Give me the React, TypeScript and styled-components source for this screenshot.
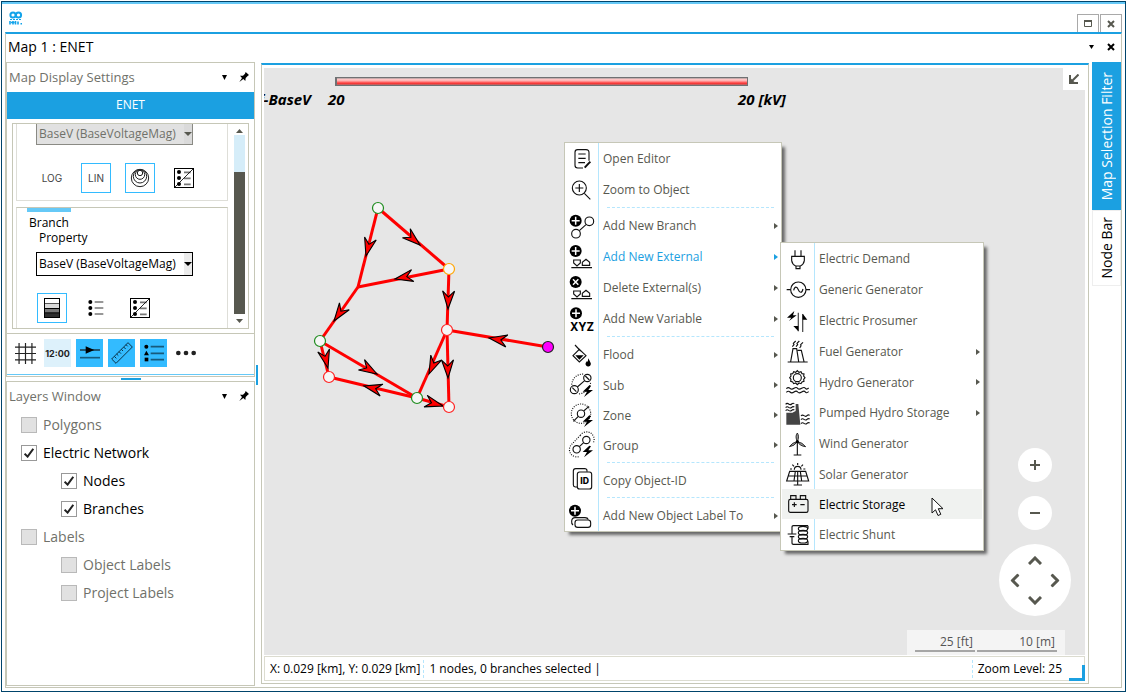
import React, { useState } from 'react';
import styled, { createGlobalStyle, css } from 'styled-components';

const c = {
  navy: '#00446b',
  blue: '#1ba0e1',
  sky: '#66c9f7',
  bright: '#33bbff',
  pale: '#b5e6fd',
  khaki: '#c6c7b7',
  text: '#57584f',
  muted: '#70716a',
  map: '#e6e6e6',
};

const GlobalStyle = createGlobalStyle`
  * { box-sizing: border-box; }
  body { margin: 0; background: #fff; font-family: "Open Sans", "Noto Sans", sans-serif; font-size: 12px; color: #000; }
  button, select, input { font: inherit; color: inherit; margin: 0; }
  button { padding: 0; border: 0; background: none; }
  svg { display: block; flex: none; }
`;

const Frame = styled.div`
  min-height: 100vh;
  padding: 1px 0 1px 1px;
  display: flex;
`;
const Window = styled.div`
  flex: 1;
  min-width: 0;
  display: flex;
  flex-direction: column;
  border: 1px solid ${c.navy};
  box-shadow: inset 0 2px 0 ${c.sky};
  padding: 2px 3px 3px;
`;
const TitleBar = styled.header`
  height: 28px;
  padding-left: 4px;
  display: flex;
  align-items: flex-end;
  justify-content: space-between;
`;
const LogoSlot = styled.span`
  align-self: center;
`;
const WindowButtons = styled.div`
  display: flex;
  gap: 1px;
`;
const WindowButton = styled.button`
  width: 22px;
  height: 18px;
  border: 1px solid #a9a9a9;
  border-bottom: 0;
  color: ${c.text};
  display: grid;
  place-items: center;
`;
const Workspace = styled.div`
  flex: 1;
  display: flex;
  flex-direction: column;
  border: 1px solid ${c.khaki};
  border-top: 2px solid ${c.blue};
`;
const Caption = styled.div`
  height: 28px;
  padding: 0 6px 2px 2px;
  display: flex;
  align-items: center;
  gap: 13px;
`;
const CaptionTitle = styled.h1`
  flex: 1;
  margin: 0;
  font-size: 14px;
  line-height: 18px;
  font-weight: 400;
`;
const Body = styled.div`
  flex: 1;
  display: flex;
`;
const Sidebar = styled.aside`
  width: 249px;
  flex: none;
  display: flex;
  flex-direction: column;
`;
const Panel = styled.section<{ $grow?: boolean }>`
  border: 1px solid ${c.khaki};
  ${(p) => p.$grow && css`flex: 1; margin-bottom: 1px;`}
`;
const PanelHead = styled.div`
  height: 29px;
  padding: 0 5px 1px 2px;
  display: flex;
  align-items: center;
  gap: 12px;
  color: ${c.muted};
`;
const PanelTitle = styled.h2`
  flex: 1;
  margin: 0;
  font-size: 13px;
  font-weight: 400;
`;
const GlyphButton = styled.button`
  color: #000;
`;
const NetworkBar = styled.div`
  height: 27px;
  background: ${c.blue};
  color: #fff;
  text-align: center;
  line-height: 25px;
`;
const ScrollBox = styled.div`
  margin: 4px 5px;
  height: 206px;
  border: 1px solid ${c.khaki};
  display: flex;
  overflow: hidden;
`;
const Groups = styled.div`
  flex: 1;
  padding-left: 3px;
  display: flex;
  flex-direction: column;
  gap: 6px;
`;
const Group = styled.div<{ $last?: boolean }>`
  border: 1px solid #deded8;
  ${(p) => (p.$last
    ? css`border-bottom: 0; border-top-color: ${c.khaki}; flex: 1; padding-left: 10px;`
    : css`border-top: 0; height: 77px; padding-left: 10px;`)}
`;
const GroupAccent = styled.div`
  width: 44px;
  height: 4px;
  background: ${c.sky};
`;
const GroupName = styled.div`
  line-height: 16px;
  padding: 3px 0 0 2px;
`;
const FieldLabel = styled.label`
  display: block;
  line-height: 14px;
  padding-left: 12px;
  font-size: 12px;
`;
const SelectBox = styled.div<{ $off?: boolean }>`
  position: relative;
  width: 157px;
  height: ${(p) => (p.$off ? 21 : 24)}px;
  margin: ${(p) => (p.$off ? '0 0 18px 9px' : '7px 0 17px 9px')};
  border: 1px solid ${(p) => (p.$off ? '#8a8a84' : '#000')};
  ${(p) => p.$off && css`border-top: 0;`}
`;
const Select = styled.select<{ $off?: boolean }>`
  appearance: none;
  width: 100%;
  height: 100%;
  padding: 0 10px 1px 2px;
  border: 0;
  border-radius: 0;
  opacity: 1;
  font-size: 12px;
  background: ${(p) => (p.$off ? '#e1e1e1' : '#fff')};
  color: ${(p) => (p.$off ? '#70716a' : '#000')};
`;
const SelectArrow = styled.span<{ $off?: boolean }>`
  position: absolute;
  top: 0;
  right: 0;
  width: 8px;
  height: 100%;
  display: grid;
  place-items: center;
  pointer-events: none;
  background: ${(p) => (p.$off ? '#dadada' : '#ececec')};
  color: ${(p) => (p.$off ? '#57584f' : '#000')};
`;
const ModeRow = styled.div`
  display: flex;
  gap: 14px;
  padding-left: 10px;
`;
const ModeButton = styled.button<{ $on?: boolean }>`
  width: 30px;
  height: 30px;
  display: grid;
  place-items: center;
  border: 1px solid ${(p) => (p.$on ? c.bright : 'transparent')};
  font-family: Inter, sans-serif;
  font-size: 10px;
  color: #444;
`;
const ScrollBar = styled.div`
  width: 20px;
  padding: 3px 3px 3px 6px;
  display: flex;
  flex-direction: column;
  align-items: center;
`;
const ScrollArrow = styled.span`
  height: 8px;
  display: grid;
  place-items: center;
  color: ${c.text};
`;
const ScrollTrack = styled.div`
  width: 11px;
  flex: 1;
  padding-top: 37px;
  margin-bottom: 3px;
  background: #d5edf9;
  display: flex;
`;
const ScrollThumb = styled.div`
  flex: 1;
  background: ${c.text};
`;
const Tools = styled.div`
  height: 43px;
  padding: 5px 5px 9px;
  display: flex;
  align-items: center;
  gap: 5px;
  border: 1px solid ${c.khaki};
  border-top: 0;
  box-shadow: inset 0 -1px 0 #fff, inset 0 -2px 0 ${c.sky};
`;
const ToolButton = styled.button<{ $tone?: string }>`
  width: 27px;
  height: 28px;
  display: grid;
  place-items: center;
  background: ${(p) => p.$tone || 'none'};
  font: 700 9px Inter, sans-serif;
  color: #222;
`;
const RowSplitter = styled.div`
  height: 4px;
  display: flex;
  justify-content: center;
`;
const RowGrip = styled.span`
  width: 20px;
  height: 2px;
  margin-top: 1px;
  background: ${c.blue};
`;
const ColumnSplitter = styled.div`
  width: 6px;
  padding-left: 1px;
  display: flex;
  align-items: center;
`;
const ColumnGrip = styled.span`
  width: 2px;
  height: 20px;
  background: ${c.blue};
`;
const LayerList = styled.ul`
  list-style: none;
  margin: 0;
  padding: 0 0 0 14px;
`;
const LayerRow = styled.li<{ $child?: boolean; $on?: boolean }>`
  height: 28px;
  padding-left: ${(p) => (p.$child ? 40 : 0)}px;
  display: flex;
  align-items: center;
  color: ${(p) => (p.$on ? '#000' : '#70716a')};
`;
const LayerLabel = styled.label`
  display: flex;
  align-items: center;
  gap: 6px;
  font-size: 14px;
  line-height: 18px;
`;
const CheckCell = styled.span`
  display: grid;
  place-items: center;
  > * { grid-area: 1 / 1; }
  svg { pointer-events: none; }
`;
const CheckInput = styled.input`
  appearance: none;
  width: 16px;
  height: 16px;
  border: 1px solid #b9b9b9;
  background: #e1e1e1;
  &:checked { background: #fff; border-color: #999; }
`;
const MapPane = styled.main`
  flex: 1;
  min-width: 0;
  display: flex;
  flex-direction: column;
  margin: 1px 3px 3px 0;
  padding: 3px 3px 2px 2px;
  border: 1px solid ${c.khaki};
  border-top: 2px solid ${c.blue};
`;
const MapCanvas = styled.div`
  position: relative;
  flex: 1;
  min-height: 587px;
  overflow: hidden;
  background: ${c.map};
`;
const LegendScale = styled.div`
  width: 413px;
  height: 9px;
  margin: 9px 0 0 71px;
  border: 1px solid #6f7173;
  border-left-width: 2px;
  background: linear-gradient(#a8a0a0 0, #ffc4c4 20%, #ffb0b0 40%, #ff3030 75%, #b07070 100%);
`;
const LegendText = styled.div`
  display: flex;
  margin-left: -6px;
  line-height: 17px;
  padding-top: 5px;
  font-weight: 700;
  font-style: italic;
  font-size: 15px;
`;
const LegendName = styled.span`
  width: 70px;
`;
const LegendLow = styled.span`
  width: 410px;
`;
const Network = styled.svg`
  position: absolute;
  left: 0;
  top: 0;
`;
const CollapseButton = styled.button`
  position: absolute;
  top: 0;
  right: 0;
  width: 22px;
  height: 22px;
  background: #fff;
  display: grid;
  place-items: center;
  color: ${c.text};
`;
const MapControls = styled.div`
  position: absolute;
  right: 14px;
  bottom: 39px;
  display: flex;
  flex-direction: column;
  align-items: center;
  gap: 14px;
`;
const ZoomButton = styled.button`
  width: 34px;
  height: 34px;
  border-radius: 50%;
  background: #fff;
  display: grid;
  place-items: center;
  color: ${c.text};
`;
const PanPad = styled.div`
  width: 72px;
  height: 72px;
  padding: 6px;
  border-radius: 50%;
  background: #fff;
  display: grid;
  grid-template-columns: repeat(3, 1fr);
  grid-template-rows: repeat(3, 1fr);
  color: ${c.text};
`;
const PanButton = styled.button<{ $area: string; $turn: number }>`
  grid-area: ${(p) => p.$area};
  display: grid;
  place-items: center;
  svg { transform: rotate(${(p) => p.$turn}deg); }
`;
const ScaleBar = styled.div`
  position: absolute;
  right: 20px;
  bottom: 0;
  height: 25px;
  padding: 3px 8px;
  display: flex;
  gap: 2px;
  background: #f4f4f4;
  color: #555;
`;
const ScaleUnit = styled.div<{ $w: number }>`
  width: ${(p) => p.$w}px;
  height: 19px;
  padding-right: 2px;
  border-bottom: 2px solid #a6a6a6;
  text-align: right;
  line-height: 18px;
`;
const StatusBar = styled.footer`
  height: 25px;
  margin-top: 1px;
  border: 1px solid #dcdcd0;
  padding-left: 5px;
  display: flex;
  align-items: center;
`;
const StatusItem = styled.span`
  padding-right: 3px;
  margin-right: 5px;
  line-height: 18px;
  border-right: 1px dashed ${c.pale};
  white-space: nowrap;
`;
const StatusText = styled.span`
  flex: 1;
  white-space: pre;
`;
const ZoomLevel = styled.span`
  padding: 0 7px 0 5px;
  line-height: 18px;
  border-left: 1px dashed ${c.pale};
`;
const ResizeCorner = styled.span`
  width: 16px;
  height: 16px;
  margin: 0 -1px -1px 0;
  align-self: flex-end;
  border: solid ${c.blue};
  border-width: 0 3px 3px 0;
`;
const SideTabs = styled.nav`
  width: 29px;
  flex: none;
`;
const SideTab = styled.button<{ $on?: boolean; $h: number }>`
  width: 29px;
  height: ${(p) => p.$h}px;
  display: flex;
  align-items: center;
  justify-content: center;
  border: 1px solid #eee;
  font-size: 14px;
  ${(p) => p.$on && css`background: ${c.blue}; border-color: ${c.blue}; color: #fff;`}
  span { writing-mode: vertical-rl; transform: rotate(180deg); white-space: nowrap; }
`;
const Menu = styled.div<{ $x: number; $y: number; $w: number }>`
  position: absolute;
  left: ${(p) => p.$x}px;
  top: ${(p) => p.$y}px;
  width: ${(p) => p.$w}px;
  border: 1px solid ${c.khaki};
  background: linear-gradient(90deg, #fff 33px, ${c.pale} 33px, ${c.pale} 34px, #fff 34px);
  box-shadow: 4px 4px 3px -1px rgba(0, 0, 0, 0.55);
`;
const MenuRow = styled.button<{ $tight?: boolean; $tone?: 'active' | 'hover' }>`
  width: 100%;
  height: ${(p) => (p.$tight ? 30 : 31)}px;
  padding: 0 3px 0 4px;
  display: flex;
  align-items: center;
  gap: 8px;
  text-align: left;
  color: ${(p) => (p.$tone === 'active' ? c.blue : p.$tone === 'hover' ? '#000' : c.text)};
  ${(p) => p.$tone === 'hover' && css`background: #f0f2f0; background-clip: padding-box; border: solid transparent; border-width: 0 1px; padding: 0 3px;`}
`;
const MenuText = styled.span`
  flex: 1;
  white-space: nowrap;
`;
const MenuRule = styled.div`
  height: 5px;
  margin: 0 7px 0 42px;
  display: flex;
  align-items: center;
  &::after { content: ''; flex: 1; border-top: 1px dashed ${c.pale}; }
`;
const MenuIconBox = styled.span`
  color: #111;
  svg { overflow: visible; }
`;
const Pointer = styled.svg`
  position: absolute;
  left: 667px;
  top: 429px;
`;

const Caret = ({ w = 5, h = 5 }: { w?: number; h?: number }) => (
  <svg width={w} height={h} viewBox="0 0 10 10" preserveAspectRatio="none" fill="currentColor"><path d="M0 0H10L5 10Z" /></svg>
);
const Pin = () => (
  <svg width="10" height="10" viewBox="0 0 30 30" fill="currentColor"><path d="M20 0L30 9L26 12L20 18L19 27L13 21L1 30L9 18L3 11L12 11L18 5Z" /></svg>
);
const Cross = () => (
  <svg width="8" height="8" viewBox="0 0 8 8" stroke="currentColor" strokeWidth="2"><path d="M1 1L7 7M7 1L1 7" /></svg>
);
const Logo = () => (
  <svg width="14" height="14" viewBox="0 0 14 14" fill="none" stroke="#12a3ea" strokeWidth="2">
    <circle cx="4" cy="4" r="2.6" /><circle cx="9.5" cy="4" r="2.6" />
    <path d="M1 8.5H12" strokeWidth="1" strokeDasharray="2 1" />
    <path d="M1 10V13.5M2 11.5H5.5M6.5 10V13.5M9 10.5V13.5M11.5 12.8H13" strokeWidth="1.6" />
    <path d="M4 10V13.5" strokeWidth="1.6" />
  </svg>
);
const ListCrossed = () => (
  <svg width="20" height="20" viewBox="0 0 60 60" fill="none" stroke="#000">
    <rect x="1.5" y="1.5" width="57" height="57" strokeWidth="3" />
    <g fill="#000" stroke="none"><circle cx="15" cy="12" r="6" /><circle cx="15" cy="30" r="6" /><circle cx="15" cy="48" r="6" /></g>
    <path d="M30 13H50M30 31H50M30 49H50" stroke="#777" strokeWidth="5" />
    <path d="M3 57L57 3" strokeWidth="2.5" />
  </svg>
);
const Rings = () => (
  <svg width="20" height="20" viewBox="0 0 60 60" fill="none" stroke="#222" strokeWidth="3">
    <circle cx="30" cy="30" r="26" /><circle cx="30" cy="25" r="20" /><circle cx="30" cy="20" r="14" /><circle cx="30" cy="15" r="8" />
  </svg>
);
const Shades = () => (
  <svg width="16" height="20" viewBox="0 0 48 60">
    <rect width="48" height="60" fill="#000" /><rect x="3" y="3" width="42" height="13" fill="#fff" />
    <rect x="3" y="18" width="42" height="12" fill="#dadada" /><rect x="3" y="33" width="42" height="10" fill="#777" />
    <rect x="3" y="46" width="42" height="11" fill="#2c2c2c" />
  </svg>
);
const Bullets = () => (
  <svg width="16" height="18" viewBox="0 0 48 54">
    <g><circle cx="7" cy="9" r="6" /><circle cx="7" cy="27" r="6" /><circle cx="7" cy="45" r="6" /></g>
    <path d="M20 9H46M20 27H46M20 45H46" stroke="#777" strokeWidth="5" />
  </svg>
);
const GridIcon = () => (
  <svg width="21" height="21" viewBox="0 0 62 62" stroke="#222" strokeWidth="3.5"><path d="M12 0V62M31 0V62M50 0V62M0 12H62M0 31H62M0 50H62" /></svg>
);
const FlowIcon = () => (
  <svg width="20" height="14" viewBox="0 0 60 42"><path d="M0 12H60" stroke="#111" strokeWidth="3.5" /><path d="M17 1L43 12L17 23Z" /><path d="M0 35H60" stroke="#165a7c" strokeWidth="5" /></svg>
);
const RulerIcon = () => (
  <svg width="22" height="22" viewBox="0 0 66 66" fill="none" stroke="#0c3348" strokeWidth="3">
    <path d="M2 51L51 2L64 15L15 64Z" /><path d="M10 43L16 49M17 36L22 41M24 29L30 35M31 22L36 27M38 15L44 21M45 8L50 13" />
  </svg>
);
const LayersListIcon = () => (
  <svg width="20" height="18" viewBox="0 0 60 54"><circle cx="7" cy="8" r="6" /><path d="M7 20L15 34H0Z" /><rect x="2" y="41" width="11" height="11" /><path d="M20 8H60M20 28H60M20 47H60" stroke="#175a7c" strokeWidth="5" /></svg>
);
const DotsIcon = () => (
  <svg width="20" height="6" viewBox="0 0 60 18" fill="#222"><circle cx="7" cy="9" r="7" /><circle cx="30" cy="9" r="7" /><circle cx="53" cy="9" r="7" /></svg>
);

const Badge = ({ x, y, cross }: { x: number; y: number; cross?: boolean }) => (
  <g transform={`translate(${x} ${y})`}>
    <circle r="18" fill="#000" stroke="none" />
    <path d={cross ? 'M-8 -8L8 8M8 -8L-8 8' : 'M-12 0H12M0 -12V12'} stroke="#fff" strokeWidth="4.5" />
  </g>
);
const Bolt = ({ x = 0, y = 0 }: { x?: number; y?: number }) => (
  <path transform={`translate(${x} ${y})`} d="M61 40L41 59H54L45 75L72 54H58L66 42Z" fill="#000" stroke="none" />
);
const Externals = () => <path d="M14 48H34V57L24 66L14 57Z M40 64V55L51 46L62 55V64Z M7 71H69" />;

const glyphs: Record<string, React.ReactNode> = {
  editor: <><path d="M60 44V20Q60 11 51 11H26Q18 11 18 19V58Q18 66 26 66H42" /><path d="M28 24H50M28 37H50M28 50H48" /><path d="M64 47L47 65" strokeWidth="6" /></>,
  zoom: <><circle cx="31" cy="33" r="21" /><path d="M31 21V45M19 33H43M46 49L64 67" /></>,
  branch: <><Badge x={20} y={23} /><circle cx="61" cy="25" r="13" /><circle cx="21" cy="62" r="13" /><path d="M51 35L31 53" /></>,
  external: <><Badge x={20} y={21} /><Externals /></>,
  deleteExternal: <><Badge x={20} y={21} cross /><Externals /></>,
  variable: <><Badge x={21} y={22} /><text x="39" y="74" textAnchor="middle" fontFamily="Inter, sans-serif" fontWeight="700" fontSize="34" fill="#000" stroke="none">XYZ</text></>,
  flood: <><path d="M12 41L31 22L51 41L31 60Z M18 9L35 27" /><path d="M19 40H44L31 53Z" fill="#000" stroke="none" /><path d="M58 49L64 61A8 8 0 1 1 50 63L54 57L56 60Z" fill="#000" stroke="none" /></>,
  sub: <><circle cx="55" cy="18" r="11" /><circle cx="16" cy="53" r="12" /><path d="M47 26L25 45M49 12L61 24M10 47L22 59" /><path d="M8 38Q12 6 46 6M30 66Q62 60 65 30" strokeDasharray="3 4" /><Bolt /></>,
  zone: <><circle cx="36" cy="35" r="29" strokeDasharray="3 4" /><circle cx="36" cy="35" r="11" /><path d="M13 58L28 43M44 27L60 13" /><Bolt /></>,
  group: <><circle cx="52" cy="24" r="11" /><circle cx="23" cy="52" r="11" /><path d="M44 32L31 44" /><path d="M34 10A22 22 0 0 1 72 34M34 10L8 37A22 22 0 0 0 32 73" strokeDasharray="3 4" /><Bolt y={1} /></>,
  copy: <><path d="M54 14V11Q54 5 47 5H20Q13 5 13 12V53Q13 59 19 60H24" /><rect x="25" y="15" width="43" height="51" rx="7" /><text x="47" y="51" textAnchor="middle" fontFamily="Inter, sans-serif" fontWeight="800" fontSize="26" fill="#000" stroke="none">ID</text></>,
  label: <><path d="M12 66Q7 62 8 54Q9 44 18 44H48Q56 44 58 50" /><rect x="18" y="51" width="47" height="22" rx="8" /><Badge x={18} y={23} /></>,
  demand: <path d="M30 13V30M48 13V30M20 31H58V44Q56 56 46 60H32Q22 56 20 44Z M33 60V68H45V60" />,
  generic: <><circle cx="40" cy="38" r="23" /><path d="M5 38H17M63 38H75M26 40C29 27 36 28 40 38S51 49 54 36" /></>,
  prosumer: <><path d="M28 9L6 29H19L12 39L35 22H24Z" fill="#000" stroke="none" /><path d="M40 14V70M53 18V72" stroke="#555" strokeWidth="4" /><path d="M25 54H40V70Z M53 17L67 35H53Z" fill="#000" stroke="none" /></>,
  fuel: <path d="M8 69H68M17 68L24 29H35L41 68M38 34H49L57 68M22 23L27 17L25 13L32 6M33 23L38 17L36 13L43 6M44 27L48 21L47 17L54 10" />,
  hydro: <><circle cx="37" cy="26" r="12" /><path d="M37 5L42 10L48 8L51 14L57 15L56 21L60 26L56 31L57 37L51 39L48 44L42 42L37 47L32 42L26 44L23 39L17 37L18 31L14 26L18 21L17 15L23 14L26 8L32 10Z" /><path d="M4 59Q10 53 15 58T27 58T38 58T50 58T61 58T71 57M4 70Q10 64 15 69T27 69T38 69T50 69T61 69T71 68" /></>,
  pumped: <><path d="M4 38H22L32 33V12H40L46 74H4Z" fill="#444" stroke="none" /><path d="M2 13Q6 8 11 12T20 12T28 11M2 23Q6 18 11 22T20 22T28 21M2 32Q6 27 11 31T20 31T28 30M48 48Q52 43 57 47T66 47T74 46M48 59Q52 54 57 58T66 58T74 57M48 71Q52 66 57 70T66 70T74 69" /></>,
  wind: <><path d="M37 32Q29 16 37 6Q44 16 37 32ZM37 32Q22 34 13 47Q28 46 37 32ZM37 32Q52 34 62 47Q46 46 37 32Z" fill="#999" strokeWidth="2.5" /><path d="M37 34V72M26 72H49" /><circle cx="37" cy="32" r="5" fill="#000" stroke="none" /></>,
  solar: <path d="M14 31H62L71 60H5ZM10 45H66M31 31L27 60M46 31L50 60M38 31V72M26 72H51M28 26A10 10 0 0 1 48 26M38 6V12M22 11L27 16M54 11L49 16M15 24H21M55 24H61" />,
  storage: <><rect x="11" y="25" width="58" height="39" rx="5" /><path d="M17 25V14H33V25M46 25V14H62V25M21 41H35M28 34V48M46 41H59" /></>,
  shunt: <><path d="M21 36V14Q21 11 25 11H69M21 44V64Q21 67 25 67H69V58M8 36H34M14 44H28M69 11V20" /><ellipse cx="54" cy="20" rx="14" ry="7" /><ellipse cx="54" cy="32" rx="14" ry="7" /><ellipse cx="54" cy="44" rx="14" ry="7" /><ellipse cx="54" cy="56" rx="14" ry="7" /></>,
};

type Item = { icon?: string; text?: string; sub?: boolean; tight?: boolean; tone?: 'active' | 'hover' };

const objectMenu: Item[] = [
  { icon: 'editor', text: 'Open Editor' },
  { icon: 'zoom', text: 'Zoom to Object' },
  {},
  { icon: 'branch', text: 'Add New Branch', sub: true },
  { icon: 'external', text: 'Add New External', sub: true, tone: 'active' },
  { icon: 'deleteExternal', text: 'Delete External(s)', sub: true },
  { icon: 'variable', text: 'Add New Variable', sub: true },
  {},
  { icon: 'flood', text: 'Flood', sub: true },
  { icon: 'sub', text: 'Sub', sub: true, tight: true },
  { icon: 'zone', text: 'Zone', sub: true, tight: true },
  { icon: 'group', text: 'Group', sub: true, tight: true },
  {},
  { icon: 'copy', text: 'Copy Object-ID', tight: true },
  {},
  { icon: 'label', text: 'Add New Object Label To', sub: true },
];
const externalMenu: Item[] = [
  { icon: 'demand', text: 'Electric Demand' },
  { icon: 'generic', text: 'Generic Generator' },
  { icon: 'prosumer', text: 'Electric Prosumer' },
  { icon: 'fuel', text: 'Fuel Generator', sub: true },
  { icon: 'hydro', text: 'Hydro Generator', sub: true, tight: true },
  { icon: 'pumped', text: 'Pumped Hydro Storage', sub: true },
  { icon: 'wind', text: 'Wind Generator' },
  { icon: 'solar', text: 'Solar Generator', tight: true },
  { icon: 'storage', text: 'Electric Storage', tight: true, tone: 'hover' },
  { icon: 'shunt', text: 'Electric Shunt' },
];

const ContextMenu = ({ items, x, y, w }: { items: Item[]; x: number; y: number; w: number }) => (
  <Menu $x={x} $y={y} $w={w} role="menu">
    {items.map((it, i) => (it.text ? (
      <MenuRow key={i} role="menuitem" $tight={it.tight} $tone={it.tone}>
        <MenuIconBox>
          <svg width="26" height="26" viewBox="0 0 78 78" fill="none" stroke="currentColor" strokeWidth="3.4">{glyphs[it.icon!]}</svg>
        </MenuIconBox>
        <MenuText>{it.text}</MenuText>
        {it.sub && <svg width="4" height="6" viewBox="0 0 4 6" fill="currentColor"><path d="M0 0L4 3L0 6Z" /></svg>}
      </MenuRow>
    ) : <MenuRule key={i} />))}
  </Menu>
);

type Pt = [number, number];
const edges: { from: Pt; to: Pt; tip: Pt }[] = [
  { from: [378, 208], to: [358, 287], tip: [366, 256] },
  { from: [378, 208], to: [449, 269], tip: [420, 245] },
  { from: [449, 269], to: [358, 287], tip: [395, 279] },
  { from: [358, 287], to: [320, 341], tip: [334, 321] },
  { from: [449, 269], to: [447, 330], tip: [448, 309] },
  { from: [548, 347], to: [447, 330], tip: [489, 338] },
  { from: [320, 341], to: [329, 377], tip: [328, 368] },
  { from: [320, 341], to: [417, 398], tip: [377, 374] },
  { from: [417, 398], to: [329, 377], tip: [364, 386] },
  { from: [447, 330], to: [417, 398], tip: [429, 374] },
  { from: [447, 330], to: [449, 407], tip: [448, 378] },
  { from: [417, 398], to: [449, 407], tip: [443, 406] },
];
const nodes: { at: Pt; ring: string; fill?: string }[] = [
  { at: [378, 208], ring: '#1e8c1e' },
  { at: [449, 269], ring: '#ffa500' },
  { at: [447, 330], ring: '#ff2222' },
  { at: [320, 341], ring: '#1e8c1e' },
  { at: [329, 377], ring: '#ff2222' },
  { at: [417, 398], ring: '#1e8c1e' },
  { at: [449, 407], ring: '#ff2222' },
  { at: [548, 347], ring: '#222', fill: '#ff00ff' },
];

const NetworkGraph = () => (
  <Network width="320" height="400" viewBox="264 68 320 400">
    {edges.map((e, i) => <line key={i} x1={e.from[0]} y1={e.from[1]} x2={e.to[0]} y2={e.to[1]} stroke="#f00" strokeWidth="3" />)}
    {edges.map((e, i) => {
      const angle = (Math.atan2(e.to[1] - e.from[1], e.to[0] - e.from[0]) * 180) / Math.PI;
      return <path key={i} transform={`translate(${e.tip[0]} ${e.tip[1]}) rotate(${angle})`} d="M0 0L-18 -6L-12 0L-18 6Z" fill="#f00" stroke="#000" strokeWidth="1.1" />;
    })}
    {nodes.map((n, i) => <circle key={i} cx={n.at[0]} cy={n.at[1]} r="5.5" fill={n.fill || '#f6f6f6'} stroke={n.ring} strokeWidth="1.2" />)}
  </Network>
);

const layers = [
  { name: 'Polygons', on: false, child: false },
  { name: 'Electric Network', on: true, child: false },
  { name: 'Nodes', on: true, child: true },
  { name: 'Branches', on: true, child: true },
  { name: 'Labels', on: false, child: false },
  { name: 'Object Labels', on: false, child: true },
  { name: 'Project Labels', on: false, child: true },
];

const LayersPanel = () => {
  const [state, setState] = useState(layers.map((l) => l.on));
  return (
    <LayerList>
      {layers.map((l, i) => (
        <LayerRow key={l.name} $child={l.child} $on={state[i]}>
          <LayerLabel>
            <CheckCell>
              <CheckInput type="checkbox" checked={state[i]} onChange={() => setState(state.map((v, k) => (k === i ? !v : v)))} />
              {state[i] && <svg width="10" height="10" viewBox="0 0 10 10" fill="none" stroke="#222" strokeWidth="2"><path d="M.6 5.6L3.6 8.6L9.3 .8" /></svg>}
            </CheckCell>
            {l.name}
          </LayerLabel>
        </LayerRow>
      ))}
    </LayerList>
  );
};

const PanelHeader = ({ title }: { title: string }) => (
  <PanelHead>
    <PanelTitle>{title}</PanelTitle>
    <GlyphButton aria-label="Panel menu"><Caret /></GlyphButton>
    <GlyphButton aria-label="Pin panel"><Pin /></GlyphButton>
  </PanelHead>
);

const Chevron = () => (
  <svg width="14" height="9" viewBox="0 0 14 9" fill="none" stroke="currentColor" strokeWidth="3"><path d="M1 8L7 2L13 8" /></svg>
);

export default function App() {
  return (
    <Frame>
      <GlobalStyle />
      <Window>
        <TitleBar>
          <LogoSlot><Logo /></LogoSlot>
          <WindowButtons>
            <WindowButton aria-label="Maximize">
              <svg width="8" height="7" viewBox="0 0 8 7" fill="none" stroke="currentColor"><path d="M.5 1V6.5H7.5V1" /><path d="M0 1H8" strokeWidth="2" /></svg>
            </WindowButton>
            <WindowButton aria-label="Close"><Cross /></WindowButton>
          </WindowButtons>
        </TitleBar>
        <Workspace>
          <Caption>
            <CaptionTitle>Map 1 : ENET</CaptionTitle>
            <GlyphButton aria-label="Window list"><Caret w={5} h={4} /></GlyphButton>
            <GlyphButton aria-label="Close map"><Cross /></GlyphButton>
          </Caption>
          <Body>
            <Sidebar>
              <Panel>
                <PanelHeader title="Map Display Settings" />
                <NetworkBar>ENET</NetworkBar>
                <ScrollBox>
                  <Groups>
                    <Group>
                      <SelectBox $off>
                        <Select $off disabled aria-label="Node property"><option>BaseV (BaseVoltageMag)</option></Select>
                        <SelectArrow $off><Caret w={8} h={4} /></SelectArrow>
                      </SelectBox>
                      <ModeRow>
                        <ModeButton>LOG</ModeButton>
                        <ModeButton $on>LIN</ModeButton>
                        <ModeButton $on aria-label="Size rings"><Rings /></ModeButton>
                        <ModeButton aria-label="No legend"><ListCrossed /></ModeButton>
                      </ModeRow>
                    </Group>
                    <Group $last>
                      <GroupAccent />
                      <GroupName>Branch</GroupName>
                      <FieldLabel htmlFor="branch-property">Property</FieldLabel>
                      <SelectBox>
                        <Select id="branch-property"><option>BaseV (BaseVoltageMag)</option></Select>
                        <SelectArrow><Caret w={8} h={4} /></SelectArrow>
                      </SelectBox>
                      <ModeRow>
                        <ModeButton $on aria-label="Color scale"><Shades /></ModeButton>
                        <ModeButton aria-label="Legend"><Bullets /></ModeButton>
                        <ModeButton aria-label="Hide legend"><ListCrossed /></ModeButton>
                      </ModeRow>
                    </Group>
                  </Groups>
                  <ScrollBar>
                    <ScrollArrow><svg width="7" height="4" viewBox="0 0 7 4" fill="currentColor"><path d="M0 4L3.5 0L7 4Z" /></svg></ScrollArrow>
                    <ScrollTrack><ScrollThumb /></ScrollTrack>
                    <ScrollArrow><Caret w={7} h={4} /></ScrollArrow>
                  </ScrollBar>
                </ScrollBox>
              </Panel>
              <Tools>
                <ToolButton aria-label="Grid"><GridIcon /></ToolButton>
                <ToolButton $tone="#ddf1fb">12:00</ToolButton>
                <ToolButton $tone={c.bright} aria-label="Flow direction"><FlowIcon /></ToolButton>
                <ToolButton $tone={c.bright} aria-label="Ruler"><RulerIcon /></ToolButton>
                <ToolButton $tone={c.bright} aria-label="Legend list"><LayersListIcon /></ToolButton>
                <ToolButton aria-label="More"><DotsIcon /></ToolButton>
              </Tools>
              <RowSplitter><RowGrip /></RowSplitter>
              <Panel $grow>
                <PanelHeader title="Layers Window" />
                <LayersPanel />
              </Panel>
            </Sidebar>
            <ColumnSplitter><ColumnGrip /></ColumnSplitter>
            <MapPane>
              <MapCanvas>
                <LegendScale />
                <LegendText>
                  <LegendName>f-BaseV</LegendName>
                  <LegendLow>20</LegendLow>
                  <span>20 [kV]</span>
                </LegendText>
                <NetworkGraph />
                <CollapseButton aria-label="Collapse">
                  <svg width="10" height="10" viewBox="0 0 10 10" fill="none" stroke="currentColor" strokeWidth="2"><path d="M1 1V9H9M9.5 .5L1.5 8.5M1 5L5 9" /></svg>
                </CollapseButton>
                <MapControls>
                  <ZoomButton aria-label="Zoom in"><svg width="10" height="10" viewBox="0 0 10 10" stroke="currentColor" strokeWidth="2"><path d="M0 5H10M5 0V10" /></svg></ZoomButton>
                  <ZoomButton aria-label="Zoom out"><svg width="10" height="10" viewBox="0 0 10 10" stroke="currentColor" strokeWidth="2"><path d="M0 5H10" /></svg></ZoomButton>
                  <PanPad>
                    <PanButton $area="1 / 2" $turn={0} aria-label="Pan up"><Chevron /></PanButton>
                    <PanButton $area="2 / 1" $turn={-90} aria-label="Pan left"><Chevron /></PanButton>
                    <PanButton $area="2 / 3" $turn={90} aria-label="Pan right"><Chevron /></PanButton>
                    <PanButton $area="3 / 2" $turn={180} aria-label="Pan down"><Chevron /></PanButton>
                  </PanPad>
                </MapControls>
                <ScaleBar>
                  <ScaleUnit $w={60}>25 [ft]</ScaleUnit>
                  <ScaleUnit $w={80}>10 [m]</ScaleUnit>
                </ScaleBar>
                <ContextMenu items={objectMenu} x={300} y={74} w={218} />
                <ContextMenu items={externalMenu} x={516} y={174} w={204} />
                <Pointer width="13" height="20" viewBox="0 0 13 20" fill="#fff" stroke="#111"><path d="M1 1V16L4.5 12.8L7 18.5L9.8 17.3L7.3 11.7H12Z" /></Pointer>
              </MapCanvas>
              <StatusBar>
                <StatusItem>X: 0.029 [km], Y: 0.029 [km]</StatusItem>
                <StatusText>1 nodes, 0 branches selected |</StatusText>
                <ZoomLevel>Zoom Level: 25</ZoomLevel>
                <ResizeCorner />
              </StatusBar>
            </MapPane>
            <SideTabs>
              <SideTab $on $h={148}><span>Map Selection Filter</span></SideTab>
              <SideTab $h={76}><span>Node Bar</span></SideTab>
            </SideTabs>
          </Body>
        </Workspace>
      </Window>
    </Frame>
  );
}
